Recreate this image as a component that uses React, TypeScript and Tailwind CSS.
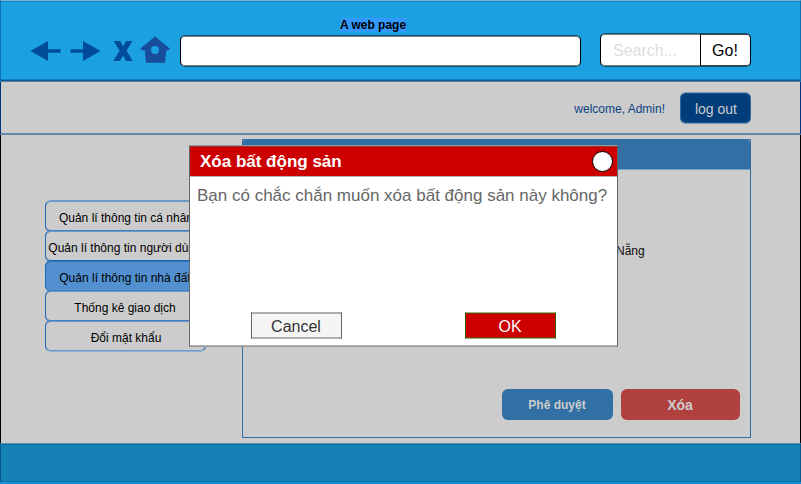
import React from "react";

const navItems = [
  { label: "Quản lí thông tin cá nhân", active: false, nudge: "pl-px" },
  { label: "Quản lí thông tin người dùng", active: false, nudge: "pr-px" },
  { label: "Quản lí thông tin nhà đất", active: true, nudge: "pr-px" },
  { label: "Thống kê giao dịch", active: false, nudge: "pr-px" },
  { label: "Đổi mật khẩu", active: false, nudge: "pl-px" },
];

function BrowserIcons() {
  return (
    <svg width="180" height="36" viewBox="0 33 180 36" className="block shrink-0">
      <g fill="#004c99">
        <path d="M30.5 51 L48 41 V49.3 H60.5 V52.7 H48 V61 Z" />
        <path d="M100.5 51 L83 41 V49.3 H70.5 V52.7 H83 V61 Z" />
        <path d="M113.8 41 H120.4 L123.2 46.4 L126 41 H132.4 L126.6 50.7 L132.8 61 H126 L123 55.4 L120 61 H113.2 L119.6 50.7 Z" />
      </g>
      <path
        fill="#184d9c"
        fillRule="evenodd"
        d="M155 36.4 L169.8 48.4 L168 50.6 L166.2 50.2 L165 62.8 H146 L144.8 50.2 L142.2 50.6 L140.3 48.4 Z M155 46 A4 4 0 1 0 155 54 A4 4 0 1 0 155 46 Z"
      />
    </svg>
  );
}

function Header() {
  return (
    <header className="h-[82px] shrink-0 border-x border-[#0a70b0] border-t border-t-[#7fb5d8] border-b border-b-[#557fa5] bg-[#1ba1e2] shadow-[inset_0_1px_0_#1583c0,inset_0_-1px_0_#0a5a94,inset_0_-2px_0_#0f7fbf]">
      <div className="flex h-[32px] items-end justify-center pr-[55px] pb-px">
        <span className="h-[14px] bg-[#3399ff] text-[12px] leading-[14px] font-bold text-black">A web page</span>
      </div>
      <div className="-ml-px flex h-[36px] items-start">
        <BrowserIcons />
        <div className="mt-[2px] h-[32px] w-[401px] shrink-0 rounded-[5px] border border-x-black border-y-[#0e5171] bg-white shadow-[inset_0_1px_0_#808080,inset_0_-1px_0_#808080]" />
        <div className="ml-[19px] flex h-[34px] w-[151px] shrink-0 overflow-hidden rounded-[5px] border border-x-black border-y-[#0e5171] bg-white text-[16px] leading-[32px] shadow-[inset_0_1px_0_#808080,inset_0_-1px_0_#808080]">
          <div className="w-[99px] pt-px pl-3 text-[#dedede]">Search...</div>
          <div className="w-[50px] border-l border-black pt-px pr-px text-center shadow-[inset_0_1px_0_#404040,inset_0_-1px_0_#404040]">
            Go!
          </div>
        </div>
      </div>
    </header>
  );
}

function UserBar() {
  return (
    <div className="flex h-[53px] shrink-0 justify-end border-x border-b-2 border-x-[#00337a] border-b-[#6488ab] pt-[10px] pr-[49px]">
      <span className="mt-[9px] mr-[15px] h-[16px] text-[12px] leading-[16px] text-[#0d4384]">welcome, Admin!</span>
      <button className="h-[32px] w-[71px] rounded-[6px] border border-x-[#2d68a0] border-y-[#7899b8] bg-[#003d7a] pt-px pl-px text-[14px] leading-[30px] text-[#cccccc] shadow-[inset_0_1px_0_#17528c,inset_0_-1px_0_#17528c]">
        log out
      </button>
    </div>
  );
}

function SideNav() {
  return (
    <nav className="mt-[65px] ml-[44px] flex w-[161px] shrink-0 flex-col">
      {navItems.map((item) => (
        <div
          key={item.label}
          className={
            "-mb-[2px] flex h-[32px] items-center justify-center rounded-[6px] border pt-[3px] text-[12px] leading-[14px] whitespace-nowrap text-black first:border-t-[#6b9ac8] last:border-b-[#8fb0cf] " +
            item.nudge +
            " " +
            (item.active
              ? "border-[#1868b8] bg-[#5290d0] shadow-[inset_0_1px_0_#2e72b4]"
              : "border-x-[#1f68b2] border-y-[#3f7fbe] shadow-[inset_0_1px_0_#6b9ac8,inset_0_-1px_0_#6b9ac8]")
          }
        >
          {item.label}
        </div>
      ))}
    </nav>
  );
}

function PropertyPanel() {
  return (
    <section className="mt-[4px] ml-[36px] flex h-[299px] w-[509px] flex-col border border-[#326fa5]">
      <div className="h-[30px] shrink-0 rounded-t-[2px] border-b border-[#7ca3c6] bg-[#326fa5]" />
      <div className="flex-1 pt-[73px] pl-[373px] text-[12px] leading-[16px] text-[#0c0c0c]">Nẵng</div>
      <div className="mb-[17px] flex justify-end gap-2 pr-[10px] text-[#cccccc]">
        <button className="h-[31px] w-[111px] rounded-[6px] bg-[#326fa5] pt-px pr-px text-[12px] font-bold">Phê duyệt</button>
        <button className="h-[31px] w-[119px] rounded-[6px] bg-[#b0413e] pt-px pr-px text-[14px] font-bold">Xóa</button>
      </div>
    </section>
  );
}

function ConfirmDialog() {
  return (
    <div
      role="dialog"
      className="absolute top-[145px] left-[189px] flex h-[202px] w-[429px] flex-col border border-x-[#666666] border-t-[#9a9a9a] border-b-[#999999] bg-white shadow-[inset_0_-1px_0_#b2b2b2]"
    >
      <div className="flex h-[31px] shrink-0 items-center justify-between border-t border-b border-t-[#993333] border-b-[#b2b2b2] bg-[#cc0000] pr-[4px] pl-[10px]">
        <h2 className="text-[17px] leading-[20px] font-bold text-white">Xóa bất động sản</h2>
        <span className="h-[21px] w-[21px] rounded-full border border-black bg-white" />
      </div>
      <p className="flex-1 pt-[9px] pl-[7px] text-[17px] leading-[20px] whitespace-nowrap text-[#666666]">
        Bạn có chắc chắn muốn xóa bất động sản này không?
      </p>
      <div className="mb-[7px] flex justify-between pr-[61px] pl-[61px] text-[16px]">
        <button className="h-[27px] w-[91px] border border-x-[#666666] border-y-[#b0b0b0] bg-[#f5f5f5] pt-[2px] pr-px leading-[23px] text-[#333333] shadow-[inset_0_1px_0_#adadad,inset_0_-1px_0_#adadad]">
          Cancel
        </button>
        <button className="h-[27px] w-[91px] border border-x-[#3a5c00] border-y-[#9bb586] bg-[#cc0000] pt-[2px] pr-px leading-[23px] text-white shadow-[inset_0_1px_0_#7f3600,inset_0_-1px_0_#7f3600]">
          OK
        </button>
      </div>
    </div>
  );
}

export default function App() {
  return (
    <div
      className="relative flex h-[484px] w-[801px] flex-col overflow-hidden bg-[#cccccc]"
      style={{ fontFamily: '"Liberation Sans", Arial, sans-serif' }}
    >
      <Header />
      <UserBar />
      <main className="flex h-[308px] shrink-0 items-start border-x border-black">
        <SideNav />
        <PropertyPanel />
      </main>
      <footer className="h-[39px] shrink-0 border-x border-t border-x-[#07588c] border-t-[#5a90b4] bg-[#1681b5] shadow-[inset_0_1px_0_#0b6ca1,inset_0_-1px_0_#0b6fa9]" />
      <div className="h-[2px] shrink-0 border-b border-[#1184c7] bg-[#179ade]" />
      <ConfirmDialog />
    </div>
  );
}
